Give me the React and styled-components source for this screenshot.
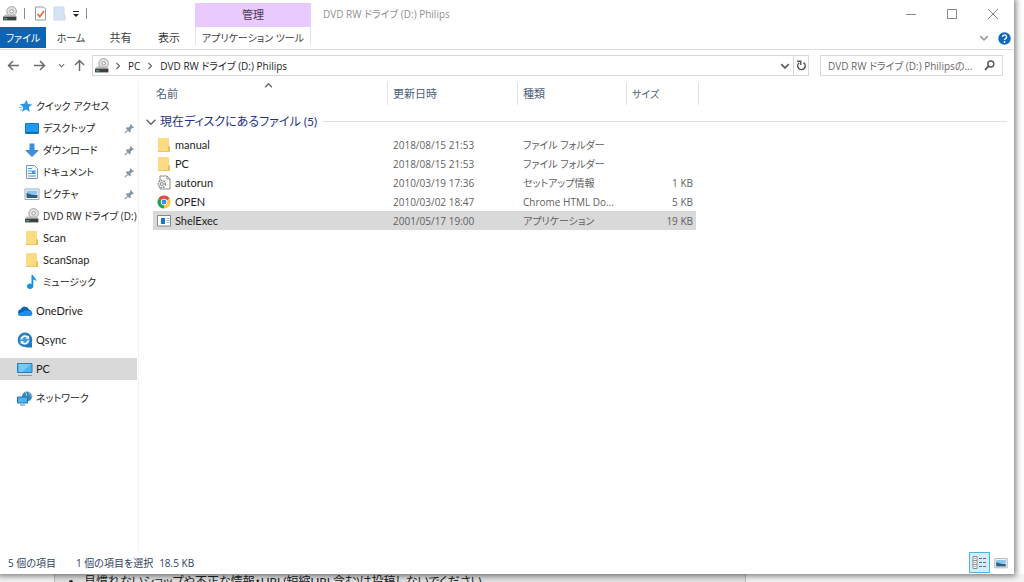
import React, { useState } from 'react';
import styled, { createGlobalStyle } from 'styled-components';

const GlobalStyle = createGlobalStyle`
  * { box-sizing: border-box; }
  body {
    margin: 0;
    background: #fff;
    overflow: hidden;
    font-family: Lato, 'Noto Sans CJK JP', sans-serif;
    font-feature-settings: 'palt';
    font-size: 11px;
    line-height: 16px;
    color: #1e1e1e;
  }
  button, input {
    font: inherit;
    font-feature-settings: inherit;
    color: inherit;
  }
  svg { flex-shrink: 0; }
`;

const SMALL_FONT = "'Open Sans', 'Noto Sans CJK JP', sans-serif";

const Desktop = styled.div`
  height: 100vh;
  display: flex;
  flex-direction: column;
`;

const Window = styled.main`
  flex: 1;
  min-height: 0;
  margin-right: 10px;
  display: flex;
  flex-direction: column;
  background: #fff;
  box-shadow: 0 0 6px 2px rgba(0, 0, 0, 0.5);
  z-index: 1;
`;

const PlainButton = styled.button`
  display: inline-flex;
  align-items: center;
  justify-content: center;
  padding: 0;
  border: none;
  background: none;
  cursor: pointer;
`;

const TitleBar = styled.header`
  height: 27px;
  padding-right: 1px;
  display: flex;
  align-items: center;
`;

const QuickTools = styled.div`
  width: 195px;
  padding-left: 2px;
  display: flex;
  align-items: center;
  gap: 6px;
`;

const Divider = styled.span`
  width: 1px;
  height: 11px;
  margin-right: 3px;
  background: #8a8a8a;
`;

const ContextTitle = styled.div`
  width: 116px;
  height: 24px;
  align-self: flex-end;
  display: flex;
  align-items: center;
  justify-content: center;
  background: #e9cafc;
  color: #4c3a58;
`;

const WindowTitle = styled.h1`
  flex: 1;
  margin: 0;
  padding-left: 12px;
  font-family: ${SMALL_FONT};
  font-size: 10px;
  font-weight: 400;
  color: #8f8f8f;
`;

const WindowButton = styled(PlainButton)`
  width: 41px;
  height: 27px;
`;

const Ribbon = styled.nav`
  height: 23px;
  display: flex;
  align-items: stretch;
  border-bottom: 1px solid #dedede;
`;

const Tab = styled(PlainButton)`
  width: ${p => p.$width}px;
  height: 21px;
  font-size: ${p => (p.$kana ? 10 : 11)}px;
  color: ${p => (p.$active ? '#fff' : '#3c3c3c')};
  background: ${p => (p.$active ? '#0e63b3' : 'none')};
`;

const ContextTab = styled(Tab)`
  margin-left: 2px;
  height: 18px;
  padding-top: 4px;
  border: solid #e4e0e8;
  border-width: 0 1px;
`;

const RibbonEnd = styled.div`
  flex: 1;
  display: flex;
  align-items: center;
  justify-content: flex-end;
  gap: 9px;
  padding-right: 3px;
`;

const NavBar = styled.div`
  padding: 5px 11px 6px 4px;
  display: flex;
  align-items: center;
`;

const NavButton = styled(PlainButton)`
  width: ${p => p.$width || 22}px;
  height: 20px;
`;

const Address = styled.div`
  flex: 1;
  height: 21px;
  margin-right: 11px;
  padding-left: 1px;
  display: flex;
  align-items: center;
  gap: 4px;
  border: 1px solid #d9d9d9;
`;

const Crumb = styled.a`
  margin: 0 2px;
  font-family: ${SMALL_FONT};
  font-size: 10px;
  color: inherit;
  text-decoration: none;
  white-space: nowrap;
`;

const AddressEnd = styled.div`
  height: 100%;
  margin-left: auto;
  display: flex;
`;

const Refresh = styled(PlainButton)`
  width: 15px;
  border-left: 1px solid #d9d9d9;
`;

const Search = styled.label`
  width: 183px;
  height: 21px;
  padding: 0 6px 0 7px;
  display: flex;
  align-items: center;
  gap: 4px;
  border: 1px solid #d9d9d9;
  input {
    flex: 1;
    min-width: 0;
    padding: 0;
    border: none;
    outline: none;
    background: none;
    font-family: ${SMALL_FONT};
    font-size: 10px;
  }
  input::placeholder { color: #6a6a6a; opacity: 1; }
`;

const Main = styled.div`
  flex: 1;
  min-height: 0;
  display: flex;
`;

const Sidebar = styled.nav`
  width: 139px;
  padding: 13px 1px 0 0;
  border-right: 1px solid #f3f3f3;
`;

const Place = styled.a`
  height: 22px;
  margin-top: ${p => (p.$top ? 7 : 0)}px;
  padding: 0 2px 0 ${p => (p.$nested ? 24 : 17)}px;
  display: flex;
  align-items: center;
  gap: 3px;
  background: ${p => (p.$selected ? '#d9d9d9' : 'none')};
  color: inherit;
  text-decoration: none;
  white-space: nowrap;
  font-family: ${p => (p.$kana ? SMALL_FONT : 'inherit')};
  font-size: ${p => (p.$kana ? 10 : 11)}px;
`;

const Spacer = styled.span`
  flex: 1;
`;

const Content = styled.section`
  flex: 1;
  min-width: 0;
  padding: 0 7px 0 6px;
`;

const FileTable = styled.table`
  width: 100%;
  table-layout: fixed;
  border-collapse: separate;
  border-spacing: 0;
`;

const HeadCell = styled.th`
  height: 23px;
  padding: 0 5px;
  border-right: ${p => (p.$plain ? 'none' : '1px solid #e2e2e2')};
  text-align: left;
  font-weight: 400;
  font-size: ${p => (p.$kana ? 10 : 11)}px;
  color: #4c607a;
`;

const NameHeadCell = styled(HeadCell)`
  padding-left: 3px;
`;

const NameHead = styled.div`
  position: relative;
  svg {
    position: absolute;
    top: -5px;
    left: 48%;
  }
`;

const GroupCell = styled.th`
  height: 30px;
  padding: 3px 0 0;
  font-weight: 400;
`;

const GroupTitle = styled.div`
  display: flex;
  align-items: center;
  gap: 3px;
  font-size: 12px;
  white-space: nowrap;
  color: #1e3287;
  &::after {
    content: '';
    flex: 1;
    margin-left: 3px;
    border-top: 1px solid #e0e0e0;
  }
`;

const Gutter = styled.td`
  padding: 0;
`;

const Cell = styled.td`
  height: 19px;
  padding: 0 3px 0 5px;
  font-family: ${SMALL_FONT};
  font-size: 10px;
  text-align: ${p => (p.$right ? 'right' : 'left')};
  border-right: ${p => (p.$right ? '3px solid #fff' : 'none')};
  background: ${p => (p.$selected ? '#d9d9d9' : 'none')};
  color: #5f5f5f;
  white-space: nowrap;
  overflow: hidden;
`;

const NameCell = styled(Cell)`
  padding-left: 3px;
  font-family: Lato, 'Noto Sans CJK JP', sans-serif;
  font-size: 11px;
  color: #1e1e1e;
`;

const FileName = styled.div`
  display: flex;
  align-items: center;
  gap: 3px;
`;

const IconSlot = styled.span`
  width: 16px;
  display: flex;
  justify-content: center;
`;

const StatusBar = styled.footer`
  height: 23px;
  padding: 0 3px 0 8px;
  display: flex;
  align-items: center;
  font-family: ${SMALL_FONT};
  font-size: 10px;
  color: #2f4260;
`;

const StatusText = styled.span`
  margin-right: ${p => p.$gap || 0}px;
`;

const ViewButton = styled(PlainButton)`
  width: 21px;
  height: 21px;
  border: ${p => (p.$active ? '1px solid #4db2e8' : 'none')};
  background: ${p => (p.$active ? '#d3eefb' : 'none')};
`;

const PageBehind = styled.div`
  height: 8px;
  padding: 0 278px 0 54px;
  background: #f4f4f4;
  overflow: hidden;
`;

const Notice = styled.ul`
  margin: 0;
  padding-left: 29px;
  border: solid #bdbdbd;
  border-width: 0 1px;
  background: #e2e2e2;
  font-size: 12px;
  line-height: 16px;
  white-space: nowrap;
  color: #222;
`;

const DriveIcon = () => (
  <svg width="16" height="16" viewBox="0 0 15 15">
    <circle cx="9" cy="5" r="4.5" fill="#e3e3e3" stroke="#999" strokeWidth=".8" />
    <circle cx="9" cy="5" r="1.6" fill="#fff" stroke="#888" strokeWidth=".8" />
    <path d="M3 8h9l2 2H1z" fill="#b8b8b8" />
    <path d="M1 10h12.500v3.500H1z" fill="#3b4042" />
    <path d="M2 12h3" stroke="#42d37a" />
  </svg>
);

const PropertiesIcon = () => (
  <svg width="13" height="15" viewBox="0 0 13 15">
    <path d="M1.500 1h8l2 2v11h-10z" fill="#fff" stroke="#9a9a9a" />
    <path d="M3.500 8l2.300 2.800L10 5" fill="none" stroke="#e0683a" strokeWidth="1.600" />
  </svg>
);

const NewFolderIcon = () => (
  <svg width="13" height="15" viewBox="0 0 13 15">
    <path d="M1 1h10v8h1v5H1z" fill="#d5e4f5" stroke="#c8d8ea" />
  </svg>
);

const CustomizeIcon = () => (
  <svg width="8" height="8" viewBox="0 0 8 8">
    <path d="M1 1.5h6" stroke="#222" />
    <path d="M1 4h6L4 7z" fill="#222" />
  </svg>
);

const Chevron = ({ dir = 'down', size = 8, color = '#666', weight = 1.2 }) => {
  const d = { down: 'M1 2.5l3 3 3-3', up: 'M1 5.5l3-3 3 3', right: 'M2.5 1l3 3-3 3' }[dir];
  return (
    <svg width={size} height={size} viewBox="0 0 8 8">
      <path d={d} fill="none" stroke={color} strokeWidth={weight} />
    </svg>
  );
};

const Arrow = ({ turn = 0 }) => (
  <svg width="13" height="13" viewBox="0 0 13 13">
    <path
      d="M12 6.5H1.5M6 2L1.5 6.5 6 11"
      transform={`rotate(${turn} 6.5 6.5)`}
      fill="none"
      stroke="#6c6c6c"
      strokeWidth="1.5"
    />
  </svg>
);

const RefreshIcon = () => (
  <svg width="11" height="11" viewBox="0 0 11 11">
    <path d="M7.500 2.600A3.800 3.800 0 1 1 3.200 2.800" fill="none" stroke="#555" strokeWidth="1.400" />
    <path d="M1.200 1.300h3.600v3.600" fill="none" stroke="#555" strokeWidth="1.400" />
  </svg>
);

const SearchIcon = () => (
  <svg width="13" height="13" viewBox="0 0 13 13">
    <circle cx="7.800" cy="5" r="3" fill="none" stroke="#555" strokeWidth="1.400" />
    <path d="M5.600 7.200L2 10.800" stroke="#555" strokeWidth="1.800" />
  </svg>
);

const HelpIcon = () => (
  <svg width="13" height="13" viewBox="0 0 13 13">
    <circle cx="6.5" cy="6.5" r="6.2" fill="#1068bf" />
    <path d="M4.6 5a2 2 0 1 1 2.9 1.7c-.7.4-1 .7-1 1.4" fill="none" stroke="#fff" strokeWidth="1.4" />
    <circle cx="6.5" cy="10" r=".9" fill="#fff" />
  </svg>
);

const StarIcon = () => (
  <svg width="16" height="16" viewBox="0 0 16 16">
    <path d="M9.500 2l1.500 4 4.300.4-3.400 2.700.8 4.700L9 11.500 5 13.800l1.200-4.500L3 6l4.300-.2z" fill="#2e95e0" />
    <path d="M2 9.500h3M3 12h2" stroke="#7dbdf0" />
  </svg>
);

const DesktopIcon = () => (
  <svg width="16" height="16" viewBox="0 0 16 16">
    <path d="M1.500 3.500h13v10h-13z" fill="#1d9bf0" stroke="#1578c0" />
    <path d="M2 12h12v1H2z" fill="#155f9a" />
  </svg>
);

const DownloadIcon = () => (
  <svg width="16" height="16" viewBox="0 0 16 16">
    <path d="M5.500 1.500h5V8H15l-7 7-7-7h4.500z" fill="#3b8ede" />
  </svg>
);

const DocumentIcon = () => (
  <svg width="16" height="16" viewBox="0 0 16 16">
    <path d="M2.500 1.500h8l3 3v10h-11z" fill="#f4f9fd" stroke="#7b98b2" />
    <path d="M4 4.500h4M4 7h8M4 9.500h8M4 12h8" stroke="#4b98d8" />
    <path d="M8 7h3v3H8z" fill="#4b98d8" />
  </svg>
);

const PictureIcon = ({ width = 16, height = 16 }) => (
  <svg width={width} height={height} viewBox="0 0 16 16">
    <path d="M1 3h14v10.500H1z" fill="#fff" stroke="#a2a8ad" />
    <path d="M2.500 4.500h11v4h-11z" fill="#8cc6ee" />
    <path d="M2.500 7l5 1.500 6 .5v3h-11z" fill="#2d5f86" />
  </svg>
);

const FolderIcon = () => (
  <svg width="16" height="16" viewBox="0 0 16 16">
    <path d="M2 1h11v8.500h1V15H2z" fill="#fbdc83" />
    <path d="M12 9.500h2V15h-2z" fill="#e9bf54" />
    <path d="M2 14.500h12" stroke="#edc765" />
  </svg>
);

const MusicIcon = () => (
  <svg width="16" height="16" viewBox="0 0 16 16">
    <path d="M7.500 1h1.600c.3 2.500 3.600 3.300 3.500 7-.4-1.400-1.800-2.300-3.300-2.500v6.800a3.200 2.700 0 1 1-1.800-2.400z" fill="#1591e5" />
  </svg>
);

const CloudIcon = () => (
  <svg width="16" height="16" viewBox="0 0 16 16">
    <path d="M4 13a3.500 3.500 0 0 1-.4-6.800 4.700 4.700 0 0 1 8.600.5A3.200 3.200 0 0 1 12.500 13z" fill="#0b62b8" />
    <path d="M4 13c-2 0-3-1-3.200-2L9 7.200c3 .8 6 1 6.500 3.500-.3 1.600-1.500 2.300-3 2.300z" fill="#1e90e6" />
  </svg>
);

const SyncIcon = () => (
  <svg width="16" height="16" viewBox="0 0 16 16">
    <path d="M8 .5a7.300 7.300 0 1 1 0 14.600A7.300 7.300 0 0 1 8 .5zM9 11h6v4.500H9z" fill="#1c79bd" />
    <circle cx="7.800" cy="7.800" r="5.500" fill="#3f9bd6" />
    <path d="M4.300 7.500a3.700 3.700 0 0 1 6.500-2M11.300 8.300a3.700 3.700 0 0 1-6.500 2" fill="none" stroke="#fff" strokeWidth="1.600" />
    <path d="M12 3.500v3.300H8.700zM3.700 12.300V9H7z" fill="#fff" />
  </svg>
);

const PcIcon = () => (
  <svg width="16" height="16" viewBox="0 0 16 16">
    <path d="M.5 2.500h14.500v9H.5z" fill="#4bb5f3" stroke="#2b7fb8" />
    <path d="M2 3h12L5 11H2z" fill="#8bd2fa" opacity=".7" />
    <path d="M1 14.500h14" stroke="#6f9dbb" />
  </svg>
);

const NetworkIcon = () => (
  <svg width="16" height="16" viewBox="0 0 16 16">
    <circle cx="10" cy="6.500" r="5" fill="#3b87b8" />
    <path d="M8 2c2 1 2 3 1 4M12 2c0 3 3 3 3 5" fill="none" stroke="#9fd0e8" />
    <path d="M.5 7h10v6H.5z" fill="#4bb5f3" stroke="#2372a5" />
    <path d="M3 15h5" stroke="#4d86ab" />
  </svg>
);

const PinIcon = () => (
  <svg width="11" height="11" viewBox="0 0 11 11">
    <path d="M6.500 1L10 4.500l-1 .6-.8-.2L6.600 6.500l.1 2-1 .9L1.800 5.300l.9-1 2 .1L6.300 2.800 6 1.800z" fill="#8494a2" />
    <path d="M3.700 7.300L.8 10.200" stroke="#8494a2" strokeWidth="1.200" />
  </svg>
);

const SetupIcon = () => (
  <svg width="14" height="15" viewBox="0 0 14 15">
    <path d="M3 1h7l3 3v10H3z" fill="#fff" stroke="#8c8c8c" />
    <path d="M10 1v3h3" fill="none" stroke="#8c8c8c" />
    <circle cx="4.800" cy="9" r="3.600" fill="#eee" stroke="#888" strokeWidth="1.400" strokeDasharray="1.600 1" />
    <circle cx="4.800" cy="9" r="1.500" fill="#fff" stroke="#888" />
  </svg>
);

const ChromeIcon = () => (
  <svg width="14" height="14" viewBox="0 0 14 14">
    <path d="M7 7L1.370 3.750A6.500 6.500 0 0 1 12.630 3.750z" fill="#dd4b3e" />
    <path d="M7 7l5.630-3.250A6.500 6.500 0 0 1 7 13.500z" fill="#fbcb3c" />
    <path d="M7 7v6.500A6.500 6.500 0 0 1 1.370 3.750z" fill="#22a05a" />
    <circle cx="7" cy="7" r="3.200" fill="#fff" />
    <circle cx="7" cy="7" r="2.400" fill="#4285f4" />
  </svg>
);

const ProgramIcon = () => (
  <svg width="14" height="12" viewBox="0 0 14 12">
    <path d="M.5.5h13v10.500H.5z" fill="#fff" stroke="#7d8a94" />
    <path d="M4 3h4v6H4z" fill="#1478c8" />
    <path d="M9.500 3.500h3M9.500 5.500h3M9.500 7.500h3" stroke="#9fb4c4" />
  </svg>
);

const DetailsIcon = () => (
  <svg width="15" height="13" viewBox="0 0 15 13">
    <path d="M1 .5h4v12H1zM1 4.500h4M1 8.500h4" fill="#fff" stroke="#8d8d8d" />
    <path d="M2.500 2.500h1M2.500 6.500h1M2.500 10.500h1" stroke="#555" />
    <path d="M7 2.500h3M11 2.500h3M7 6.500h3M11 6.500h3M7 10.500h3M11 10.500h3" stroke="#5d6e7a" />
  </svg>
);

const PLACES = [
  { label: 'クイック アクセス', icon: StarIcon, kana: true },
  { label: 'デスクトップ', icon: DesktopIcon, nested: true, pinned: true, kana: true },
  { label: 'ダウンロード', icon: DownloadIcon, nested: true, pinned: true, kana: true },
  { label: 'ドキュメント', icon: DocumentIcon, nested: true, pinned: true, kana: true },
  { label: 'ピクチャ', icon: PictureIcon, nested: true, pinned: true, kana: true },
  { label: 'DVD RW ドライブ (D:)', icon: DriveIcon, nested: true, kana: true },
  { label: 'Scan', icon: FolderIcon, nested: true },
  { label: 'ScanSnap', icon: FolderIcon, nested: true },
  { label: 'ミュージック', icon: MusicIcon, nested: true, kana: true },
  { label: 'OneDrive', icon: CloudIcon, top: true },
  { label: 'Qsync', icon: SyncIcon, top: true },
  { label: 'PC', icon: PcIcon, top: true, selected: true },
  { label: 'ネットワーク', icon: NetworkIcon, top: true, kana: true },
];

const FILES = [
  { name: 'manual', date: '2018/08/15 21:53', type: 'ファイル フォルダー', size: '', icon: FolderIcon },
  { name: 'PC', date: '2018/08/15 21:53', type: 'ファイル フォルダー', size: '', icon: FolderIcon },
  { name: 'autorun', date: '2010/03/19 17:36', type: 'セットアップ情報', size: '1 KB', icon: SetupIcon },
  { name: 'OPEN', date: '2010/03/02 18:47', type: 'Chrome HTML Do...', size: '5 KB', icon: ChromeIcon },
  { name: 'ShelExec', date: '2001/05/17 19:00', type: 'アプリケーション', size: '19 KB', icon: ProgramIcon },
];

export default function App() {
  const [selected, setSelected] = useState('ShelExec');
  const [query, setQuery] = useState('');

  return (
    <Desktop>
      <GlobalStyle />
      <Window>
        <TitleBar>
          <QuickTools>
            <DriveIcon />
            <Divider />
            <PlainButton aria-label="プロパティ"><PropertiesIcon /></PlainButton>
            <PlainButton aria-label="新しいフォルダー"><NewFolderIcon /></PlainButton>
            <PlainButton aria-label="カスタマイズ"><CustomizeIcon /></PlainButton>
            <Divider />
          </QuickTools>
          <ContextTitle>管理</ContextTitle>
          <WindowTitle>DVD RW ドライブ (D:) Philips</WindowTitle>
          <WindowButton aria-label="最小化">
            <svg width="10" height="10"><path d="M0 5.500h10" stroke="#888" /></svg>
          </WindowButton>
          <WindowButton aria-label="最大化">
            <svg width="10" height="10"><path d="M.5.5h9v9h-9z" fill="none" stroke="#888" /></svg>
          </WindowButton>
          <WindowButton aria-label="閉じる">
            <svg width="10" height="10"><path d="M0 0l10 10M10 0L0 10" stroke="#888" /></svg>
          </WindowButton>
        </TitleBar>

        <Ribbon>
          <Tab $width={46} $active $kana>ファイル</Tab>
          <Tab $width={50} $kana>ホーム</Tab>
          <Tab $width={49}>共有</Tab>
          <Tab $width={48}>表示</Tab>
          <ContextTab $width={116} $kana>アプリケーション ツール</ContextTab>
          <RibbonEnd>
            <Chevron size={10} color="#999" />
            <PlainButton aria-label="ヘルプ"><HelpIcon /></PlainButton>
          </RibbonEnd>
        </Ribbon>

        <NavBar>
          <NavButton $width={18} aria-label="戻る"><Arrow /></NavButton>
          <NavButton $width={34} aria-label="進む"><Arrow turn={180} /></NavButton>
          <NavButton $width={10} aria-label="履歴"><Chevron size={7} /></NavButton>
          <NavButton $width={26} aria-label="上へ"><Arrow turn={90} /></NavButton>
          <Address>
            <DriveIcon />
            <Chevron dir="right" />
            <Crumb href="#pc">PC</Crumb>
            <Chevron dir="right" />
            <Crumb href="#drive">DVD RW ドライブ (D:) Philips</Crumb>
            <AddressEnd>
              <NavButton $width={16} aria-label="以前の場所"><Chevron size={10} weight={1.5} /></NavButton>
              <Refresh aria-label="更新"><RefreshIcon /></Refresh>
            </AddressEnd>
          </Address>
          <Search>
            <input
              aria-label="検索"
              placeholder="DVD RW ドライブ (D:) Philipsの..."
              value={query}
              onChange={e => setQuery(e.target.value)}
            />
            <SearchIcon />
          </Search>
        </NavBar>

        <Main>
          <Sidebar>
            {PLACES.map(({ label, icon: Icon, nested, pinned, top, selected: current, kana }) => (
              <Place key={label} href="#place" $nested={nested} $top={top} $selected={current} $kana={kana}>
                <Icon />
                {label}
                {pinned && <><Spacer /><PinIcon /></>}
              </Place>
            ))}
          </Sidebar>
          <Content>
            <FileTable>
              <colgroup>
                <col width="8" />
                <col width="235" />
                <col width="130" />
                <col width="109" />
                <col width="72" />
                <col />
              </colgroup>
              <thead>
                <tr>
                  <HeadCell as="td" $plain />
                  <NameHeadCell><NameHead>名前<Chevron dir="up" size={9} /></NameHead></NameHeadCell>
                  <HeadCell>更新日時</HeadCell>
                  <HeadCell>種類</HeadCell>
                  <HeadCell $kana>サイズ</HeadCell>
                  <HeadCell as="td" $plain />
                </tr>
              </thead>
              <tbody>
                <tr>
                  <GroupCell colSpan={6}>
                    <GroupTitle>
                      <Chevron size={12} weight={1} />
                      現在ディスクにあるファイル (5)
                    </GroupTitle>
                  </GroupCell>
                </tr>
                {FILES.map(({ name, date, type, size, icon: Icon }) => {
                  const on = selected === name;
                  return (
                    <tr key={name} onClick={() => setSelected(name)}>
                      <Gutter />
                      <NameCell $selected={on}>
                        <FileName><IconSlot><Icon /></IconSlot>{name}</FileName>
                      </NameCell>
                      <Cell $selected={on}>{date}</Cell>
                      <Cell $selected={on}>{type}</Cell>
                      <Cell $selected={on} $right>{size}</Cell>
                    </tr>
                  );
                })}
              </tbody>
            </FileTable>
          </Content>
        </Main>

        <StatusBar>
          <StatusText $gap={20}>5 個の項目</StatusText>
          <StatusText $gap={6}>1 個の項目を選択</StatusText>
          <StatusText>18.5 KB</StatusText>
          <Spacer />
          <ViewButton $active aria-label="詳細"><DetailsIcon /></ViewButton>
          <ViewButton aria-label="大アイコン"><PictureIcon width={14} height={14} /></ViewButton>
        </StatusBar>
      </Window>
      <PageBehind>
        <Notice>
          <li>見慣れないショップや不正な情報・URL(短縮URL含む)は投稿しないでください。</li>
        </Notice>
      </PageBehind>
    </Desktop>
  );
}
